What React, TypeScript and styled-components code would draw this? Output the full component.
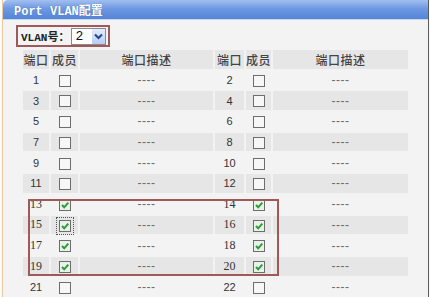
import React from "react";
import styled, { createGlobalStyle } from "styled-components";

const GlobalStyle = createGlobalStyle`
  html, body {
    margin: 0;
    padding: 0;
    background: #fbfbfb;
    font-family: "Liberation Sans", "Noto Sans CJK SC", sans-serif;
    overflow: hidden;
  }
`;

const ports = Array.from({ length: 11 }, (_, i) => ({
  left: i * 2 + 1,
  right: i * 2 + 2,
}));

// ports that are members of VLAN 2
const members = [13, 14, 15, 16, 17, 18, 19, 20];

const App = () => {
  return (
    <Panel>
      <GlobalStyle />
      <TitleBar>
        <Title>Port VLAN配置</Title>
      </TitleBar>
      <Body>
        <VlanRow>
          <VlanLabel>VLAN号：</VlanLabel>
          <Select>
            <SelectValue>2</SelectValue>
            <SelectArrow>
              <svg width="9" height="7" viewBox="0 0 9 7">
                <path d="M1 1.5 L4.5 5 L8 1.5" fill="none" stroke="#23449a" strokeWidth="2" />
              </svg>
            </SelectArrow>
          </Select>
        </VlanRow>
        <Table>
          <colgroup>
            <col style={{ width: 26 }} />
            <col style={{ width: 27 }} />
            <col style={{ width: 133 }} />
            <col style={{ width: 29 }} />
            <col style={{ width: 25 }} />
            <col style={{ width: 135 }} />
          </colgroup>
          <thead>
            <tr>
              <Head>端口</Head>
              <Head>成员</Head>
              <Head>端口描述</Head>
              <Head>端口</Head>
              <Head>成员</Head>
              <Head>端口描述</Head>
            </tr>
          </thead>
          <tbody>
            {ports.map((p, i) => (
              <Row key={p.left} $shaded={i % 2 === 1}>
                <Num $serif={members.includes(p.left)}>{p.left}</Num>
                <Cell>
                  <Check $checked={members.includes(p.left)} $focus={p.left === 15} />
                </Cell>
                <Desc>----</Desc>
                <Num $serif={members.includes(p.right)}>{p.right}</Num>
                <Cell>
                  <Check $checked={members.includes(p.right)} />
                </Cell>
                <Desc>----</Desc>
              </Row>
            ))}
          </tbody>
        </Table>
      </Body>
      <Highlight />
    </Panel>
  );
};

const Check = ({ $checked, $focus }: { $checked?: boolean; $focus?: boolean }) => (
  <FocusRing $focus={$focus}>
    <Box $checked={$checked}>
      {$checked && (
        <svg width="10" height="10" viewBox="0 0 10 10">
          <path d="M2 5 L4.2 7.3 L8.3 2.6" fill="none" stroke="#2f9a3a" strokeWidth="2" />
        </svg>
      )}
    </Box>
  </FocusRing>
);

const Panel = styled.div`
  position: relative;
  margin-left: 2px;
  width: 425px;
  height: 297px;
  border-left: 1px solid #e2c9a2;
  border-right: 1px solid #5a5a5a;
  background: #f3f3f3;
`;

const TitleBar = styled.div`
  height: 19px;
  display: flex;
  align-items: center;
  padding-left: 11px;
  border-top-left-radius: 5px;
  background: linear-gradient(#a2bff0, #6e98e2 45%, #5585d6);
  border-bottom: 1px solid #c9d8f2;
`;

const Title = styled.span`
  color: #fff;
  font-family: "Liberation Mono", "Noto Sans CJK SC", monospace;
  font-size: 12px;
  font-weight: bold;
  text-shadow: 0 0 1px #3c5f9c;
`;

const Body = styled.div`
  padding: 5px 0 0 13px;
`;

const VlanRow = styled.div`
  width: 87px;
  height: 18px;
  display: flex;
  align-items: center;
  gap: 2px;
  padding-left: 3px;
  border: 2px solid #9e5a5a;
`;

const VlanLabel = styled.span`
  font-family: "Liberation Mono", "Noto Sans CJK SC", monospace;
  font-size: 11px;
  font-weight: bold;
  color: #222;
`;

const Select = styled.div`
  width: 33px;
  height: 15px;
  display: flex;
  align-items: center;
  justify-content: space-between;
  border: 1px solid #8a8a8a;
  background: #fff;
`;

const SelectValue = styled.span`
  padding-left: 3px;
  font-family: "Liberation Mono", monospace;
  font-size: 13px;
  color: #111;
`;

const SelectArrow = styled.span`
  width: 13px;
  height: 15px;
  display: flex;
  align-items: center;
  justify-content: center;
  background: linear-gradient(#e4ecfb, #b9cdf2);
`;

const Table = styled.table`
  margin: 1px 0 0 5px;
  border-collapse: separate;
  border-spacing: 2px;
  table-layout: fixed;
  width: 389px;
`;

const Head = styled.th`
  height: 18.7px;
  padding: 0;
  background: #e6e6e6;
  font-family: "Noto Sans CJK SC", sans-serif;
  font-size: 12px;
  font-weight: 500;
  letter-spacing: 0.5px;
  color: #444;
  text-align: center;
`;

const Row = styled.tr<{ $shaded: boolean }>`
  height: 18.7px;
  & > td {
    background: ${(p) => (p.$shaded ? "#e6e6e6" : "#f3f3f3")};
  }
`;

const Cell = styled.td`
  padding: 0;
  text-align: center;
  vertical-align: middle;
`;

const Num = styled(Cell)<{ $serif: boolean }>`
  font-family: ${(p) => (p.$serif ? '"Liberation Serif", serif' : '"Liberation Sans", sans-serif')};
  font-size: ${(p) => (p.$serif ? "12px" : "11px")};
  color: #333;
`;

const Desc = styled(Cell)`
  font-size: 12px;
  letter-spacing: 0.5px;
  color: #6a6a6a;
`;

const FocusRing = styled.span<{ $focus?: boolean }>`
  display: inline-flex;
  padding: 3px;
  margin: -3px;
  vertical-align: middle;
  outline: ${(p) => (p.$focus ? "1px dotted #555" : "none")};
  outline-offset: -1px;
`;

const Box = styled.span<{ $checked?: boolean }>`
  width: 10px;
  height: 10px;
  display: flex;
  align-items: center;
  justify-content: center;
  border: 1px solid #6d6d6d;
  background: ${(p) => (p.$checked ? "#e9f2e9" : "#f7f7f7")};
`;

// annotation box drawn over the member rows
const Highlight = styled.div`
  position: absolute;
  left: 25px;
  top: 199px;
  width: 247px;
  height: 73px;
  border: 2px solid #9e5a5a;
  pointer-events: none;
`;

export default App;
